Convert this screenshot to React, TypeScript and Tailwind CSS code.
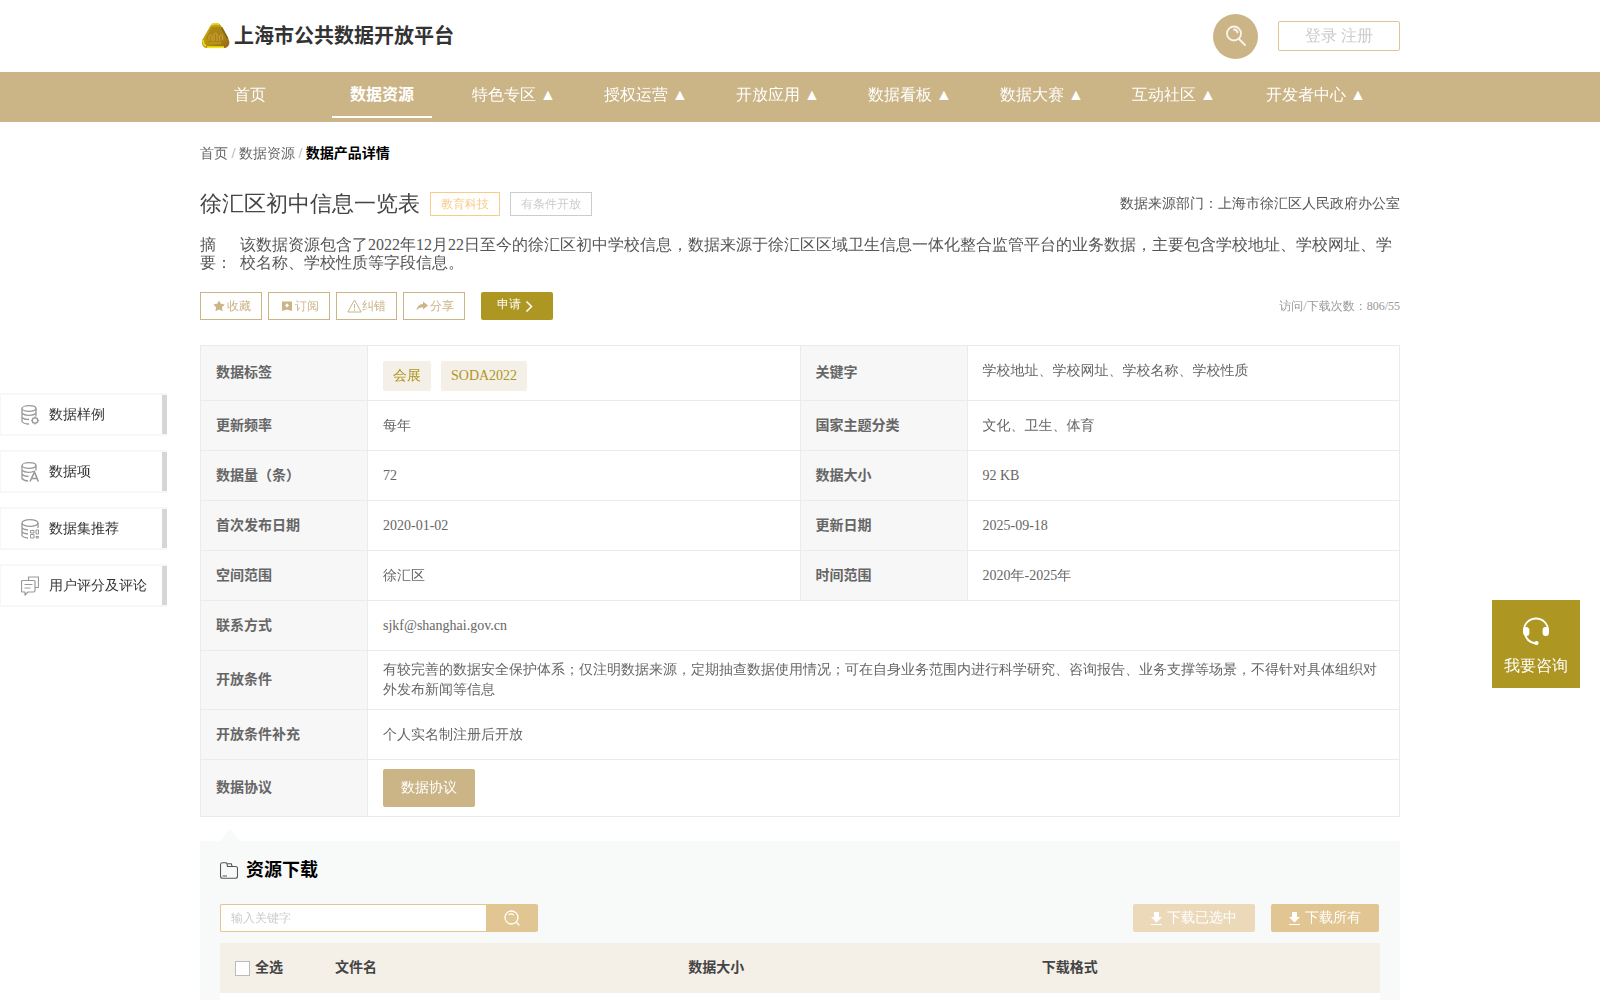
import { useState } from "react";

interface NavItem {
  label: string;
  hasMenu?: boolean;
  active?: boolean;
}

interface InfoRow {
  label: string;
  value: string;
  label2?: string;
  value2?: string;
}

const navItems: NavItem[] = [
  { label: "首页" },
  { label: "数据资源", active: true },
  { label: "特色专区", hasMenu: true },
  { label: "授权运营", hasMenu: true },
  { label: "开放应用", hasMenu: true },
  { label: "数据看板", hasMenu: true },
  { label: "数据大赛", hasMenu: true },
  { label: "互动社区", hasMenu: true },
];

const tags = ["会展", "SODA2022"];

const infoRows: InfoRow[] = [
  { label: "更新频率", value: "每年", label2: "国家主题分类", value2: "文化、卫生、体育" },
  { label: "数据量（条）", value: "72", label2: "数据大小", value2: "92 KB" },
  { label: "首次发布日期", value: "2020-01-02", label2: "更新日期", value2: "2025-09-18" },
  { label: "空间范围", value: "徐汇区", label2: "时间范围", value2: "2020年-2025年" },
  { label: "联系方式", value: "sjkf@shanghai.gov.cn" },
  {
    label: "开放条件",
    value:
      "有较完善的数据安全保护体系；仅注明数据来源，定期抽查数据使用情况；可在自身业务范围内进行科学研究、咨询报告、业务支撑等场景，不得针对具体组织对外发布新闻等信息",
  },
  { label: "开放条件补充", value: "个人实名制注册后开放" },
];

// WenQuanYi has no bold face, so bold text uses Noto instead
const boldText = "font-bold font-['Liberation_Serif','Noto_Sans_CJK_SC',serif]";
const labelCell = `border border-[#ebebeb] bg-[#f7f7f7] px-[15px] text-left ${boldText}`;
const valueCell = "border border-[#ebebeb] px-[15px] py-[9px]";

function Logo() {
  return (
    <svg className="h-[26px] w-7" viewBox="0 0 28 26">
      <defs>
        <linearGradient id="gold" x1="0" y1="0" x2="1" y2="1">
          <stop offset="0" stopColor="#c9b70e" />
          <stop offset="0.5" stopColor="#b8930f" />
          <stop offset="1" stopColor="#94621c" />
        </linearGradient>
      </defs>
      <path d="M13.500 0c3 0 4.500 1 6 3.500l7 12.500c2 4.500.5 8-3.500 9H4.500C.5 24-1 20.500.5 16.500L8 3.500C9.500 1 10.500 0 13.500 0z" fill="url(#gold)" />
      <path d="M5 24.200h17" stroke="#f2ea14" strokeWidth="1.800" />
      <path d="M10 1.500q3.500-1.500 7 0M1.500 17q-1 4 2.500 6" stroke="#ece018" strokeWidth="1.500" fill="none" />
      <path d="M19.500 4.500l6 11" stroke="#7d6a12" strokeWidth="1.800" />
      <path d="M9.500 4h8.500l5 11-4.500 6H8l-4-6z" fill="#a8801a" opacity="0.8" />
      <path d="M7 18v-5q2-3 3 0v5M12 18v-7q1.500-2 3 0v7M17.500 18v-5q2-3 3 0v4M8 20h11" stroke="#cda42c" fill="none" />
    </svg>
  );
}

function SearchIcon() {
  return (
    <svg className="h-[22px] w-[22px]" viewBox="0 0 22 22" fill="none" stroke="#fff" strokeOpacity="0.85" strokeWidth="1.800" strokeLinecap="round">
      <circle cx="9" cy="8.500" r="7" />
      <path d="M14 14l6 6M9 4.500q3 .2 3.500 3" />
    </svg>
  );
}

function DatabaseIcon({ kind }: { kind: "gear" | "letter" | "grid" }) {
  return (
    <svg className="h-5 w-[18px]" viewBox="0 0 18 20" fill="none" stroke="#999" strokeWidth="1.300">
      {kind === "gear" && (
        <>
          <ellipse cx="8" cy="3.500" rx="7" ry="2.800" />
          <path d="M1 3.500v13q1.500 2.500 7 2.500M15 3.500v8M1 8q2 2.300 7 2.300q5 0 7-2.300M1 12.200q2 2.300 7 2.300" />
          <circle cx="14" cy="15.500" r="2.700" strokeWidth="1.200" />
          <path d="M14 11.500v1.500M14 18v1.500M10.200 15.500h1.300M16.500 15.500h1.500M11.500 13l.8.8M16.500 13l-.8.8M11.500 18l.8-.8M16.500 18l-.8-.8" />
        </>
      )}
      {kind === "letter" && (
        <>
          <ellipse cx="8" cy="3.500" rx="7" ry="2.800" />
          <path d="M1 3.500v13q1.500 2 6 2.500M15 3.500v5M1 8q2 2.300 7 2.300q3.500 0 5-1M1 12.200q2 2 6.500 2.300" />
          <path d="M9 19.500l4.500-9.500 3.800 9.500M10.800 16.500h5.500" strokeWidth="1.600" />
        </>
      )}
      {kind === "grid" && (
        <>
          <ellipse cx="9" cy="4" rx="8" ry="3.300" />
          <path d="M1 4v12.500q1.500 2.300 6 2.500M17 4v5M1 9q2 1.800 6 2M1 13q2 1.800 6 2" />
          <path d="M9.500 11.500h3.500v2.500H9.500zM15 11h2.500v4H15zM9.500 15.500h3.500V19H9.500zM15 17.500h2.500V19H15z" strokeWidth="1" />
        </>
      )}
    </svg>
  );
}

function CommentIcon() {
  return (
    <svg className="h-5 w-[18px]" viewBox="0 0 18 20" fill="none" stroke="#999" strokeWidth="1.200" strokeLinejoin="round">
      <path d="M1.500 4.500h11.500q1 0 1 1v9q0 1.500-1.500 1.500H7l-3 3v-3H1.500q-1 0-1-1V5.500q0-1 1-1zM7.500 4V1h10v10.500H14M3.500 8.500h8M3.500 12h6" />
    </svg>
  );
}

function DownloadIcon() {
  return (
    <svg className="h-[13px] w-[11px]" viewBox="0 0 11 13" fill="#fff">
      <path d="M3 0h5v5h3L5.500 10.500 0 5h3zM0 12h11v1H0z" />
    </svg>
  );
}

function Header() {
  return (
    <header>
      <div className="mx-auto flex h-[72px] max-w-[1200px] items-center justify-between">
        <h1 className={`flex items-center gap-1 text-xl text-[#333] ${boldText}`}>
          <span className="ml-0.5">
            <Logo />
          </span>
          上海市公共数据开放平台
        </h1>
        <div className="flex items-center gap-5">
          <button type="button" aria-label="搜索" className="flex h-[45px] w-[45px] items-center justify-center rounded-full bg-[#cbb486]">
            <SearchIcon />
          </button>
          <div className="flex h-[30px] w-[122px] justify-center gap-1 rounded-xs border border-[#e1c592] text-base leading-7 text-[#ccc]">
            <a href="#login">登录</a>
            <a href="#register">注册</a>
          </div>
        </div>
      </div>
      <nav className="h-[50px] bg-[#cbb486]">
        <div className="mx-auto flex max-w-[1200px] gap-8 text-base text-white">
          {navItems.map((item) => (
            <a
              key={item.label}
              href="#"
              className={`h-[46px] w-[100px] text-center leading-[46px] whitespace-nowrap ${item.active ? `border-b-2 border-white ${boldText}` : ""}`}
            >
              {item.label}
              {item.hasMenu && " ▲"}
            </a>
          ))}
          <a href="#" className="h-[46px] w-[120px] text-center leading-[46px] whitespace-nowrap">
            开发者中心 ▲
          </a>
        </div>
      </nav>
    </header>
  );
}

function SideNav() {
  const item = "flex h-[43px] w-[167px] items-stretch border-y-2 border-l border-[#f7f7f7] bg-white text-sm text-[#333]";
  const label = "flex flex-1 items-center gap-2.5 pl-5";
  return (
    <aside className="fixed top-[393px] left-0 flex flex-col gap-3.5">
      <a href="#sample" className={item}>
        <span className={label}>
          <DatabaseIcon kind="gear" />
          数据样例
        </span>
        <span className="w-[5px] bg-[#d6d6d6]" />
      </a>
      <a href="#fields" className={item}>
        <span className={label}>
          <DatabaseIcon kind="letter" />
          数据项
        </span>
        <span className="w-[5px] bg-[#d6d6d6]" />
      </a>
      <a href="#related" className={item}>
        <span className={label}>
          <DatabaseIcon kind="grid" />
          数据集推荐
        </span>
        <span className="w-[5px] bg-[#d6d6d6]" />
      </a>
      <a href="#comments" className={item}>
        <span className={label}>
          <CommentIcon />
          用户评分及评论
        </span>
        <span className="w-[5px] bg-[#d6d6d6]" />
      </a>
    </aside>
  );
}

function ActionBar() {
  const button = "flex h-7 items-center border border-[#cbb486] pr-2.5 pl-3 text-xs text-[#cbb486]";
  return (
    <div className="mt-5 flex items-center">
      <div className="flex gap-1.5">
        <button type="button" className={button}>
          <svg className="mr-0.5 h-3 w-3" viewBox="0 0 12 12" fill="currentColor">
            <path d="M6 .5l1.800 3.300 3.900.7-2.700 2.800.5 3.900L6 9.600l-3.500 1.600.5-3.900L.3 4.500l3.900-.7z" />
          </svg>
          收藏
        </button>
        <button type="button" className={button}>
          <svg className="mr-0.5 h-3 w-3" viewBox="0 0 12 12" fill="currentColor">
            <path fillRule="evenodd" d="M1 1.500h10v9.500L6 9.500 1 11zM6 3.300L4 5.500 6 7.500l2-2z" />
          </svg>
          订阅
        </button>
        <button type="button" className="flex h-7 items-center border border-[#cbb486] px-2.5 text-xs text-[#cbb486]">
          <svg className="h-3.5 w-[15px]" viewBox="0 0 15 14" fill="none" stroke="currentColor">
            <path d="M7.500 1l6.700 12H.8zM7.500 5v4.500M7.500 10.500v1.500" />
          </svg>
          纠错
        </button>
        <button type="button" className={button}>
          <svg className="mr-0.5 h-3 w-3" viewBox="0 0 12 12" fill="currentColor">
            <path d="M7 1.500l5 4-5 4V7.200Q3 7 .5 10.500 1 4.500 7 4z" />
          </svg>
          分享
        </button>
      </div>
      <button type="button" className="ml-4 flex h-7 items-center gap-1 rounded-xs bg-[#ae9622] pr-5 pl-4 text-xs text-white">
        <span className="pb-1">申请</span>
        <svg className="h-3 w-2" viewBox="0 0 8 12" fill="none" stroke="currentColor" strokeWidth="1.500">
          <path d="M1.500 1.500L6.500 6.500l-5 5" />
        </svg>
      </button>
      <span className="ml-auto text-xs text-[#999]">访问/下载次数：806/55</span>
    </div>
  );
}

function InfoTable() {
  return (
    <table className="mt-[25px] w-full table-fixed border-collapse text-sm text-[#666]">
      <colgroup>
        <col className="w-[167px]" />
        <col />
        <col className="w-[167px]" />
        <col />
      </colgroup>
      <tbody>
        <tr className="h-[55px]">
          <th scope="row" className={labelCell}>数据标签</th>
          <td className="border border-[#ebebeb] px-[15px] pt-1.5">
            <div className="flex gap-2.5">
              {tags.map((tag) => (
                <span key={tag} className="h-[30px] rounded-xs bg-[#f4efe7] px-2.5 leading-[30px] text-[#ae9622]">
                  {tag}
                </span>
              ))}
            </div>
          </td>
          <th scope="row" className={labelCell}>关键字</th>
          <td className="border border-[#ebebeb] px-[15px] pb-1">学校地址、学校网址、学校名称、学校性质</td>
        </tr>
        {infoRows.map((row) => (
          <tr key={row.label} className="h-[50px]">
            <th scope="row" className={labelCell}>{row.label}</th>
            <td className={valueCell} colSpan={row.label2 ? 1 : 3}>{row.value}</td>
            {row.label2 && <th scope="row" className={labelCell}>{row.label2}</th>}
            {row.label2 && <td className={valueCell}>{row.value2}</td>}
          </tr>
        ))}
        <tr>
          <th scope="row" className={labelCell}>数据协议</th>
          <td className={valueCell} colSpan={3}>
            <button type="button" className="block h-[38px] w-[92px] rounded-xs bg-[#cbb486] text-white">
              数据协议
            </button>
          </td>
        </tr>
      </tbody>
    </table>
  );
}

function DownloadPanel() {
  const [keyword, setKeyword] = useState("");
  const [allChecked, setAllChecked] = useState(false);

  return (
    <section className="mt-3 flex flex-1 flex-col">
      <svg className="ml-5 h-3 w-5" viewBox="0 0 20 12" fill="#f8faf9">
        <path d="M10 0l10 12H0z" />
      </svg>
      <div className="flex flex-1 flex-col bg-[#f8faf9] px-5 pt-4">
        <h2 className={`flex items-center gap-2 text-lg leading-[27px] text-black ${boldText}`}>
          <svg className="h-[18px] w-[18px]" viewBox="0 0 18 18" fill="none" stroke="#555" strokeWidth="1.100">
            <path d="M2.500 .8h3.200q1 0 1.300 1L7.500 4.500h8q2 0 2 2v7.800q0 2-2 2h-13q-2 0-2-2V2.800q0-2 2-2zM6.500 1.800h4.800l.8 2.500M2.500 14h4.500" />
          </svg>
          资源下载
        </h2>
        <div className="mt-5 flex items-center">
          <form className="flex" onSubmit={(e) => e.preventDefault()}>
            <input
              type="text"
              aria-label="关键字"
              placeholder="输入关键字"
              value={keyword}
              onChange={(e) => setKeyword(e.target.value)}
              className="h-7 w-[266px] rounded-l-xs border border-r-0 border-[#e1c592] bg-white px-2.5 text-xs placeholder:text-[#ccc]"
            />
            <button type="submit" aria-label="搜索" className="flex h-7 w-[52px] items-center justify-center rounded-r-xs bg-[#e1c592]">
              <svg className="h-4 w-4" viewBox="0 0 16 16" fill="none" stroke="#fff" strokeWidth="1.300" strokeLinecap="round">
                <circle cx="7.500" cy="7.500" r="6.500" />
                <path d="M12.500 12.500l2.500 2.500M5 4.500q2.500-1.500 4.500.3" />
              </svg>
            </button>
          </form>
          <div className="mr-px ml-auto flex gap-4 text-sm text-white">
            <button type="button" disabled className="flex h-7 items-center gap-[5px] rounded-xs bg-[#ebd9ba] px-[18px]">
              <DownloadIcon />
              下载已选中
            </button>
            <button type="button" className="flex h-7 items-center gap-[5px] rounded-xs bg-[#e1c592] px-[18px]">
              <DownloadIcon />
              下载所有
            </button>
          </div>
        </div>
        <table className={`mt-[11px] w-full table-fixed text-sm text-[#444] ${boldText}`}>
          <thead>
            <tr className="h-[50px] bg-[#f4efe7] text-left">
              <th scope="col" className="w-[100px] pl-[15px]">
                <label className="flex items-center gap-[5px]">
                  <input
                    type="checkbox"
                    checked={allChecked}
                    onChange={(e) => setAllChecked(e.target.checked)}
                    className="h-[15px] w-[15px] appearance-none border border-[#bbb] bg-white checked:bg-[#cbb486]"
                  />
                  全选
                </label>
              </th>
              <th scope="col" className="pl-[15px]">文件名</th>
              <th scope="col" className="pl-[15px]">数据大小</th>
              <th scope="col" className="pl-[15px]">下载格式</th>
            </tr>
          </thead>
        </table>
        <div className="flex-1 bg-white" />
      </div>
    </section>
  );
}

export default function App() {
  return (
    <div className="flex min-h-screen flex-col bg-white font-['Liberation_Serif','WenQuanYi_Zen_Hei','Noto_Sans_CJK_SC',serif]">
      <Header />
      <main className="mx-auto flex w-full max-w-[1200px] flex-1 flex-col">
        <nav aria-label="面包屑" className="mt-[22px] text-sm text-[#999]">
          <a href="#" className="text-[#666]">首页</a> / <a href="#" className="text-[#666]">数据资源</a> /{" "}
          <span className={`text-black ${boldText}`}>数据产品详情</span>
        </nav>
        <div className="mt-6 flex h-8 items-center text-xs">
          <h2 className="text-[22px] text-[#444]">徐汇区初中信息一览表</h2>
          <span className="ml-2.5 h-6 border border-[#f9cb8b] px-2.5 leading-[22px] text-[#f9cb8b]">教育科技</span>
          <span className="ml-2.5 h-6 border border-[#ccc] px-2.5 leading-[22px] text-[#ccc]">有条件开放</span>
          <span className="ml-auto text-sm text-[#555]">数据来源部门：上海市徐汇区人民政府办公室</span>
        </div>
        <div className="mt-4 flex text-base leading-[18px] text-[#555]">
          <span className="w-10 shrink-0">摘 要：</span>
          <p>
            该数据资源包含了2022年12月22日至今的徐汇区初中学校信息，数据来源于徐汇区区域卫生信息一体化整合监管平台的业务数据，主要包含学校地址、学校网址、学校名称、学校性质等字段信息。
          </p>
        </div>
        <ActionBar />
        <InfoTable />
        <DownloadPanel />
      </main>
      <SideNav />
      <button type="button" className="fixed top-[600px] right-5 flex h-[88px] w-[88px] flex-col items-center gap-[9px] bg-[#ae9622] pt-[17px] text-base text-white">
        <svg className="h-7 w-7" viewBox="0 0 28 28" fill="none" stroke="#fff" strokeWidth="1.800">
          <path d="M2 16V13a12 11.500 0 0 1 24 0v3M2.500 15q1.500 10 11 11.500" />
          <rect x="2" y="11" width="4.500" height="7" rx="2" fill="#fff" />
          <rect x="21.500" y="11" width="4.500" height="7" rx="2" fill="#fff" />
          <circle cx="14.500" cy="26" r="1.200" fill="#fff" />
        </svg>
        我要咨询
      </button>
    </div>
  );
}
